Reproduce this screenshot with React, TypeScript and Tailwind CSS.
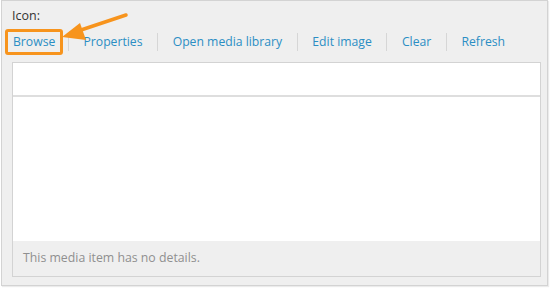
import React from "react";

const links = ["Browse", "Properties", "Open media library", "Edit image", "Clear", "Refresh"];

export default function App() {
  return (
    <div className="relative h-[288px] w-[550px] bg-white" style={{ fontFamily: '"Open Sans", "Liberation Sans", sans-serif' }}>
      <div className="ml-[1px] flex h-[286px] w-[547px] flex-col border border-[#d3d3d3] bg-[#efefef] px-[10px] shadow-[1px_1px_1px_rgba(0,0,0,0.08)]">
        {/* label */}
        <div className="pt-[6px] text-[12.5px] leading-[18px] text-[#333]">Icon:</div>

        {/* toolbar */}
        <div className="mt-[8px] flex h-[18px] items-center text-[12.2px] text-[#2b8ec4]">
          {links.map((l, i) => (
            <React.Fragment key={l}>
              {i > 0 && <span className="mx-[14.6px] h-[18px] w-px bg-[#d6d6d6]" />}
              <span
                className={
                  i === 0
                    ? "-ml-[5px] -mr-[8px] rounded-[1px] px-[6px] py-[2px] outline outline-[3px] -outline-offset-[1px] outline-[#f7941d]"
                    : ""
                }
              >
                {l}
              </span>
            </React.Fragment>
          ))}
        </div>

        {/* media panel */}
        <div className="mt-[11px] flex h-[215px] w-[529px] flex-col border border-[#d3d3d3] bg-white">
          <div className="h-[34px] border-b-2 border-[#dedede]" />
          <div className="flex-1" />
          <div className="flex h-[35px] items-center bg-[#efefef] px-[10px] text-[12.3px] text-[#8f8f8f]">
            This media item has no details.
          </div>
        </div>
      </div>

      {/* annotation arrow */}
      <svg className="absolute left-0 top-0" width="550" height="60" viewBox="0 0 550 60">
        <line x1="126" y1="15" x2="78" y2="31" stroke="#f7941d" strokeWidth="3.5" strokeLinecap="round" />
        <polygon points="62,37 80,23 86,40" fill="#f7941d" />
      </svg>
    </div>
  );
}
